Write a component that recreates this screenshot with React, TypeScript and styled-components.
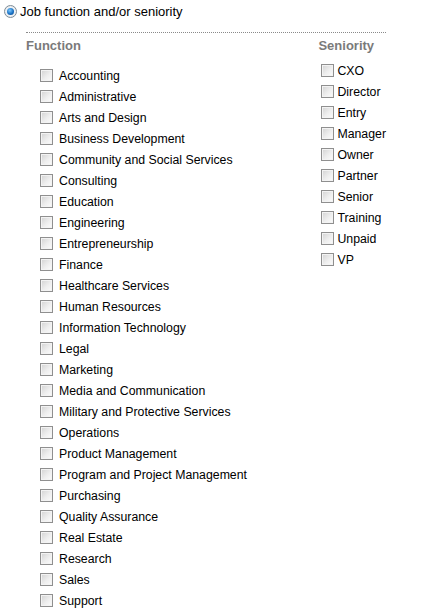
import React from "react";
import styled, { createGlobalStyle } from "styled-components";

const GlobalStyle = createGlobalStyle`
  body {
    margin: 0;
    background: #fff;
    font-family: "Liberation Sans", Arial, sans-serif;
    font-size: 12px;
    color: #000;
  }
`;

const functions = [
  "Accounting",
  "Administrative",
  "Arts and Design",
  "Business Development",
  "Community and Social Services",
  "Consulting",
  "Education",
  "Engineering",
  "Entrepreneurship",
  "Finance",
  "Healthcare Services",
  "Human Resources",
  "Information Technology",
  "Legal",
  "Marketing",
  "Media and Communication",
  "Military and Protective Services",
  "Operations",
  "Product Management",
  "Program and Project Management",
  "Purchasing",
  "Quality Assurance",
  "Real Estate",
  "Research",
  "Sales",
  "Support",
];

const seniorities = [
  "CXO",
  "Director",
  "Entry",
  "Manager",
  "Owner",
  "Partner",
  "Senior",
  "Training",
  "Unpaid",
  "VP",
];

const Wrapper = styled.div`
  width: 429px;
`;

const RadioRow = styled.label`
  display: flex;
  align-items: center;
  height: 22px;
  padding-left: 4px;
  gap: 3px;
  font-size: 13px;
`;

const Radio = styled.span`
  width: 13px;
  height: 13px;
  box-sizing: border-box;
  border-radius: 50%;
  border: 1px solid #7f8c96;
  background: radial-gradient(circle at 50% 50%, #ffffff 0, #dfe5ea 100%);
  display: flex;
  align-items: center;
  justify-content: center;

  &::after {
    content: "";
    width: 7px;
    height: 7px;
    border-radius: 50%;
    background: radial-gradient(circle at 40% 35%, #7cc8ff 0, #1a72c4 55%, #083f82 100%);
  }
`;

const Panel = styled.div`
  margin: 10px 0 0 26px;
  width: 360px;
  border-top: 1px dotted #8a8a8a;
  display: flex;
  padding-top: 5px;
`;

const Column = styled.div<{ $width?: number }>`
  display: flex;
  flex-direction: column;
  width: ${(p) => (p.$width ? `${p.$width}px` : "auto")};
`;

const Heading = styled.div`
  font-size: 13px;
  font-weight: bold;
  line-height: 16px;
  color: #7a7a7a;
`;

const List = styled.div<{ $top: number; $indent: number }>`
  display: flex;
  flex-direction: column;
  margin-top: ${(p) => p.$top}px;
  padding-left: ${(p) => p.$indent}px;
`;

const Row = styled.label<{ $gap: number }>`
  display: flex;
  align-items: center;
  height: 21px;
  gap: ${(p) => p.$gap}px;
  font-size: 12.3px;
  white-space: nowrap;
`;

const Box = styled.span`
  width: 13px;
  height: 13px;
  box-sizing: border-box;
  border: 1px solid #8f8f8f;
  box-shadow: inset 0 0 0 1px #f3f3f3;
  background: linear-gradient(135deg, #d2d2d2 0%, #eeeeee 55%, #fcfcfc 100%);
  flex-shrink: 0;
`;

export default function App() {
  return (
    <Wrapper>
      <GlobalStyle />
      <RadioRow>
        <Radio />
        Job function and/or seniority
      </RadioRow>
      <Panel>
        <Column $width={293}>
          <Heading>Function</Heading>
          <List $top={11} $indent={14}>
            {functions.map((f) => (
              <Row key={f} $gap={6}>
                <Box />
                {f}
              </Row>
            ))}
          </List>
        </Column>
        <Column>
          <Heading>Seniority</Heading>
          <List $top={6} $indent={3}>
            {seniorities.map((s) => (
              <Row key={s} $gap={3}>
                <Box />
                {s}
              </Row>
            ))}
          </List>
        </Column>
      </Panel>
    </Wrapper>
  );
}
